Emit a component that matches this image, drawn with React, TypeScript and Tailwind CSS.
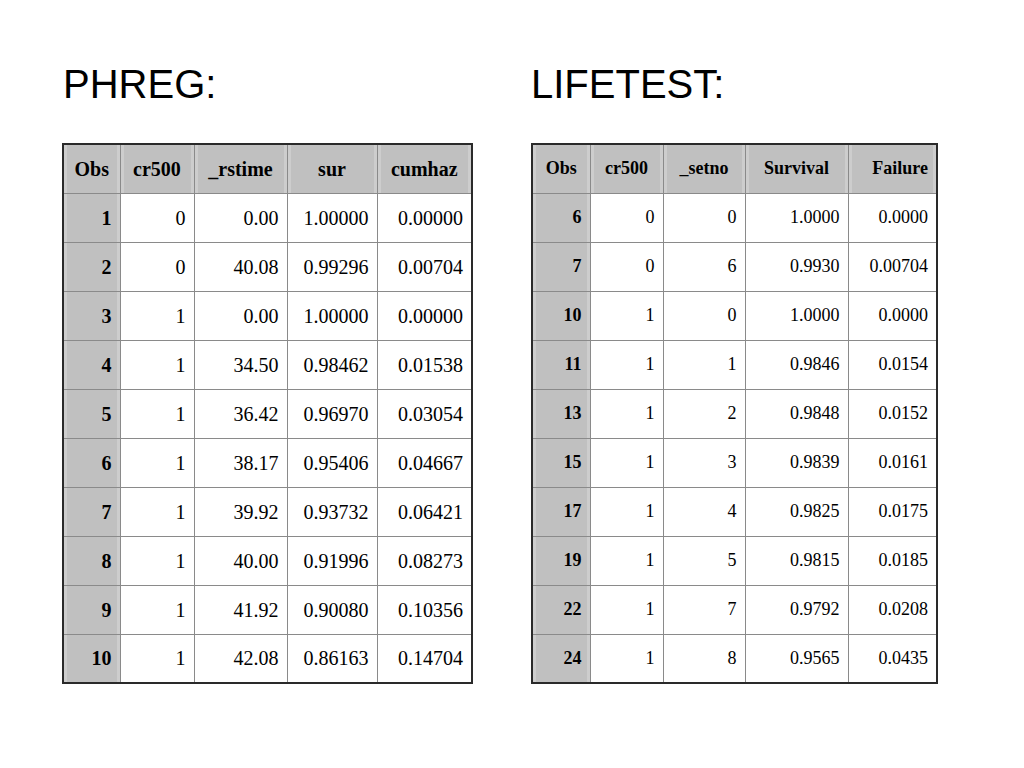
type Col = { label: string; width: string; align: "center" | "right" };

const phregCols: Col[] = [
  { label: "Obs", width: "w-[57px]", align: "center" },
  { label: "cr500", width: "w-[74px]", align: "center" },
  { label: "_rstime", width: "w-[93px]", align: "center" },
  { label: "sur", width: "w-[90px]", align: "center" },
  { label: "cumhaz", width: "w-[95px]", align: "center" },
];

const phregRows = [
  ["1", "0", "0.00", "1.00000", "0.00000"],
  ["2", "0", "40.08", "0.99296", "0.00704"],
  ["3", "1", "0.00", "1.00000", "0.00000"],
  ["4", "1", "34.50", "0.98462", "0.01538"],
  ["5", "1", "36.42", "0.96970", "0.03054"],
  ["6", "1", "38.17", "0.95406", "0.04667"],
  ["7", "1", "39.92", "0.93732", "0.06421"],
  ["8", "1", "40.00", "0.91996", "0.08273"],
  ["9", "1", "41.92", "0.90080", "0.10356"],
  ["10", "1", "42.08", "0.86163", "0.14704"],
];

const lifeCols: Col[] = [
  { label: "Obs", width: "w-[58px]", align: "center" },
  { label: "cr500", width: "w-[73px]", align: "center" },
  { label: "_setno", width: "w-[82px]", align: "center" },
  { label: "Survival", width: "w-[103px]", align: "center" },
  { label: "Failure", width: "w-[89px]", align: "right" },
];

const lifeRows = [
  ["6", "0", "0", "1.0000", "0.0000"],
  ["7", "0", "6", "0.9930", "0.00704"],
  ["10", "1", "0", "1.0000", "0.0000"],
  ["11", "1", "1", "0.9846", "0.0154"],
  ["13", "1", "2", "0.9848", "0.0152"],
  ["15", "1", "3", "0.9839", "0.0161"],
  ["17", "1", "4", "0.9825", "0.0175"],
  ["19", "1", "5", "0.9815", "0.0185"],
  ["22", "1", "7", "0.9792", "0.0208"],
  ["24", "1", "8", "0.9565", "0.0435"],
];

const gray =
  "bg-[#c0c0c0] shadow-[inset_3px_0_0_#cdcdcd,inset_-3px_0_0_#cdcdcd]";

const DataTable = ({
  cols,
  rows,
  textSize,
}: {
  cols: Col[];
  rows: string[][];
  textSize: string;
}) => {
  return (
    <table
      className={`border-collapse border-2 border-[#2a2a2a] ${textSize} text-black font-['Liberation_Serif',serif]`}
    >
      <thead>
        <tr className="h-[49px]">
          {cols.map((c, idx) => (
            <th
              key={idx}
              className={`${c.width} ${gray} border border-[#8a8a8a] font-bold px-2 ${
                c.align === "right" ? "text-right" : "text-center"
              }`}
            >
              {c.label}
            </th>
          ))}
        </tr>
      </thead>
      <tbody>
        {rows.map((r, i) => (
          <tr key={i} className="h-[49px]">
            {r.map((v, j) => (
              <td
                key={j}
                className={`border border-[#8a8a8a] text-right pr-2 ${
                  j === 0 ? `${gray} font-bold` : "bg-white"
                }`}
              >
                {v}
              </td>
            ))}
          </tr>
        ))}
      </tbody>
    </table>
  );
};

export default function App() {
  return (
    <div className="w-[1024px] h-[768px] bg-white pt-[64px] pl-[62px] flex gap-[58px] font-['Liberation_Sans',Arial,sans-serif]">
      <div className="flex flex-col">
        <h1 className="text-[40px] leading-none pl-px">PHREG:</h1>
        <div className="mt-[39px]">
          <DataTable cols={phregCols} rows={phregRows} textSize="text-[20px]" />
        </div>
      </div>
      <div className="flex flex-col">
        <h1 className="text-[40px] leading-none">LIFETEST:</h1>
        <div className="mt-[39px]">
          <DataTable cols={lifeCols} rows={lifeRows} textSize="text-[18px]" />
        </div>
      </div>
    </div>
  );
}
